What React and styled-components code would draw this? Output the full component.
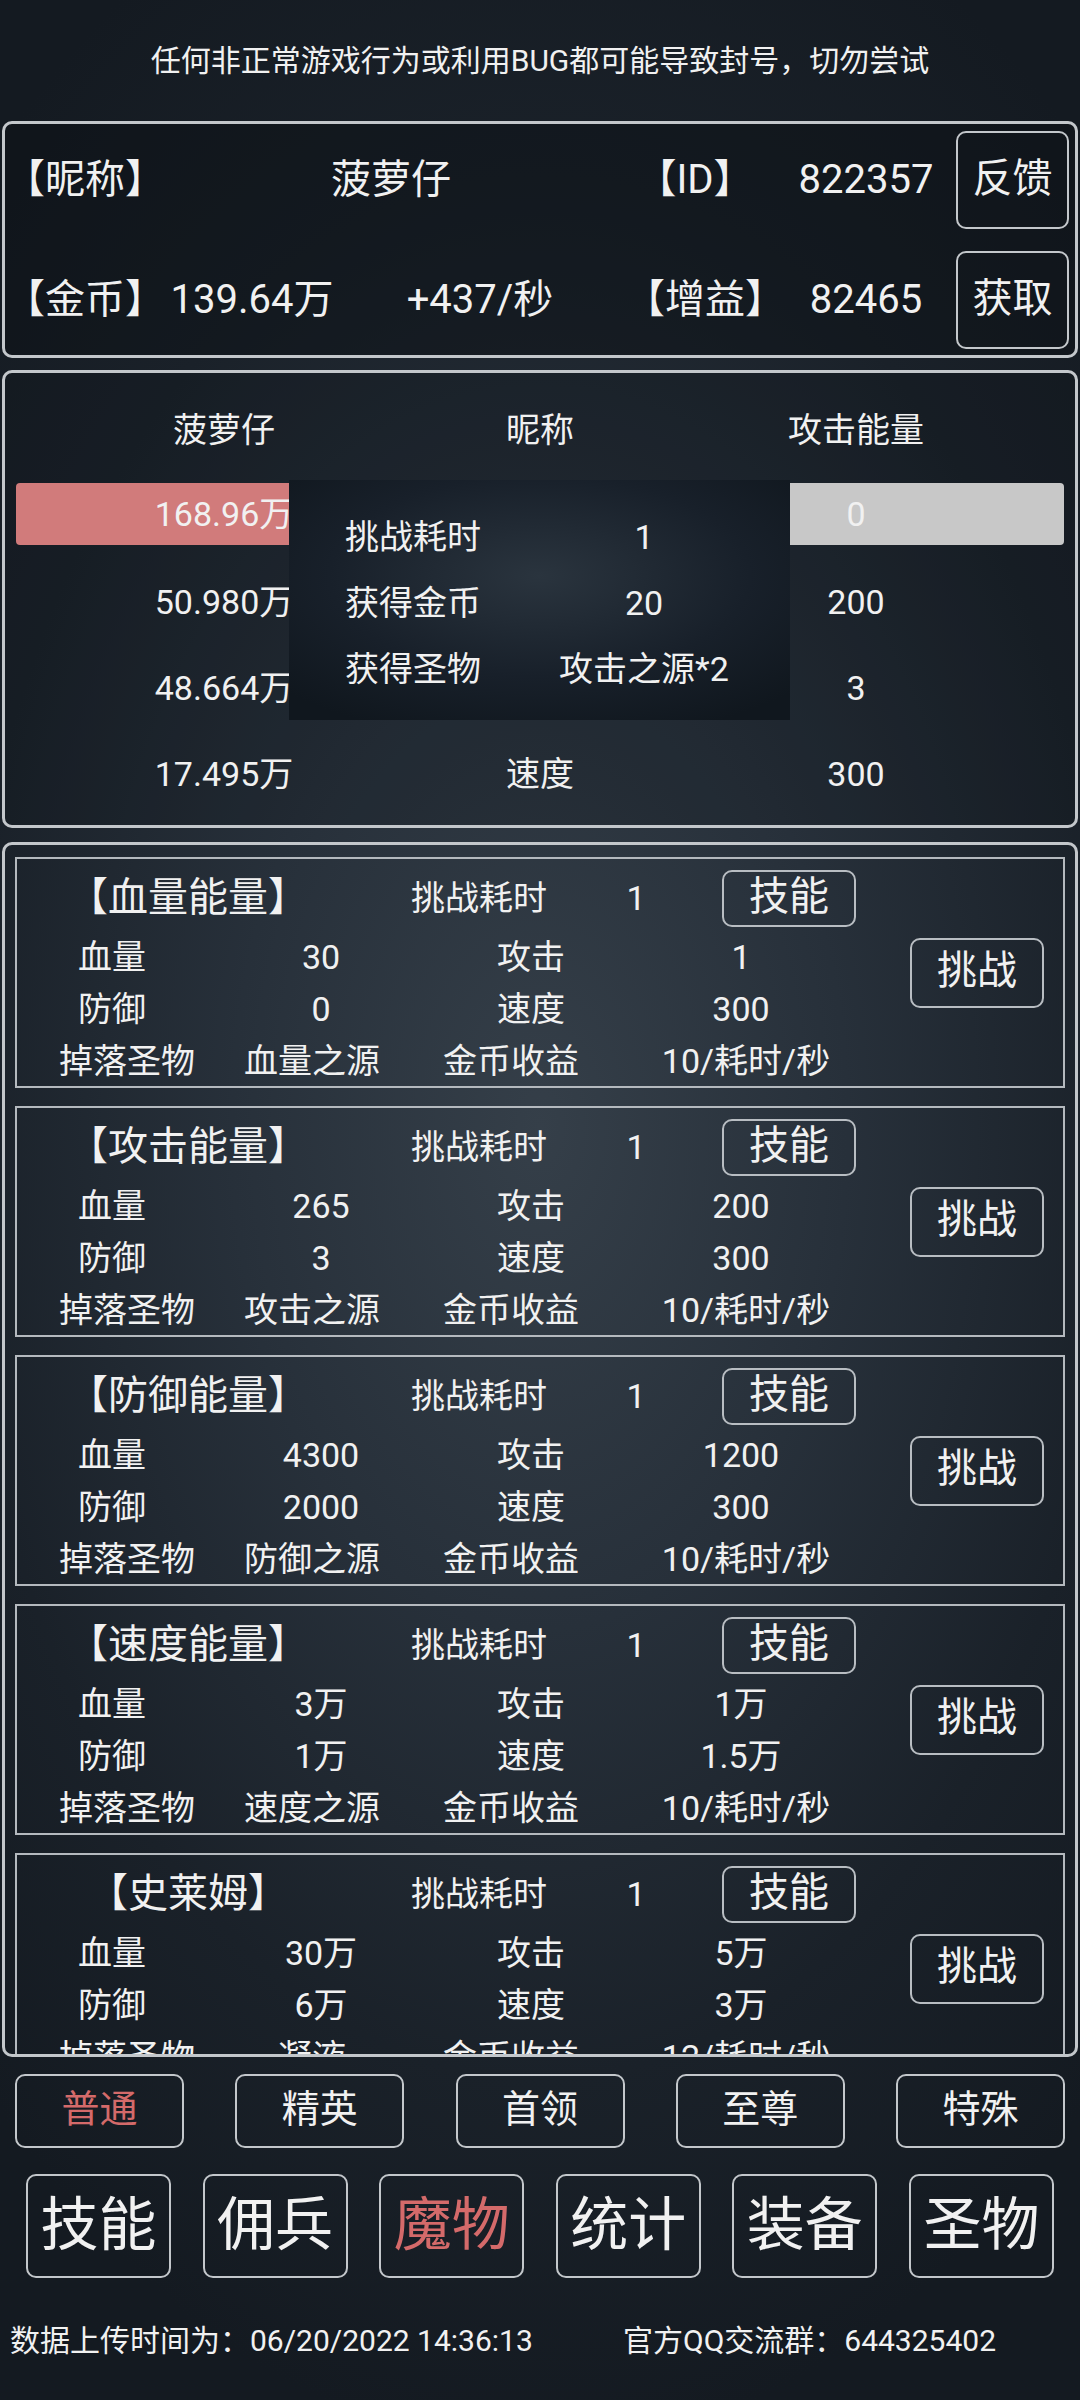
import React from 'react';
import styled, { createGlobalStyle } from 'styled-components';

const GlobalStyle = createGlobalStyle`
  html, body {
    margin: 0;
    padding: 0;
  }

  body {
    width: 1080px;
    height: 2400px;
    background: radial-gradient(ellipse 75% 55% at 50% 47%, #353f49 0%, #27303a 38%, #1a2129 72%, #141a21 100%);
    color: #f1f1f1;
    font-family: Roboto, "Noto Sans CJK SC", sans-serif;
    line-height: 1.2;
  }
`;

const RED = '#d46a6a';

const Page = styled.div`
  width: 1080px;
  height: 2400px;
  display: flex;
  flex-direction: column;
`;

const Banner = styled.div`
  height: 121px;
  display: flex;
  align-items: center;
  justify-content: center;
  font-size: 30px;
`;

/* top info block */
const InfoPanel = styled.div`
  margin: 0 2px;
  height: 237px;
  box-sizing: border-box;
  border: 3px solid #c3c7cb;
  border-radius: 10px;
  background: rgba(10, 15, 21, 0.45);
  padding: 7px 6px 6px 0;
  display: flex;
  flex-direction: column;
  gap: 22px;
`;

const InfoRow = styled.div`
  height: 98px;
  display: flex;
  align-items: center;
`;

const InfoCell = styled.div`
  width: ${p => p.w}px;
  text-align: ${p => p.align || 'center'};
  font-size: 40px;
  white-space: nowrap;
`;

const SideButton = styled.button`
  margin-left: auto;
  width: 113px;
  height: 98px;
  box-sizing: border-box;
  border: 2px solid #c3c7cb;
  border-radius: 10px;
  background: transparent;
  color: #f1f1f1;
  font-family: inherit;
  font-size: 40px;
  line-height: 1.2;
  padding: 0 0 3px;
`;

/* battle compare block */
const StatsPanel = styled.div`
  position: relative;
  margin: 12px 2px 0;
  height: 458px;
  box-sizing: border-box;
  border: 3px solid #c3c7cb;
  border-radius: 10px;
  background: rgba(10, 15, 21, 0.2);
  padding: 14px 11px 0;
`;

const StatsRow = styled.div`
  display: grid;
  grid-template-columns: repeat(3, 316px);
  justify-content: center;
  align-items: center;
  height: 86px;
  font-size: 34px;
  white-space: nowrap;
  text-align: center;
`;

const BarRow = styled(StatsRow)`
  height: 62px;
  margin: 10px 0 14px;
  border-radius: 4px;
  background: linear-gradient(to right, #d17b7b ${p => p.fill}%, #c8c8c8 ${p => p.fill}%);
`;

const ResultPopup = styled.div`
  position: absolute;
  top: 107px;
  left: 284px;
  width: 501px;
  height: 240px;
  box-sizing: border-box;
  padding-top: 24px;
  background: radial-gradient(ellipse 70% 70% at 50% 40%, #2a343e 0%, #18202a 60%, #10171e 100%);
`;

const PopupRow = styled.div`
  display: grid;
  grid-template-columns: 248px 214px;
  align-items: center;
  height: 66px;
  font-size: 34px;
  text-align: center;
  white-space: nowrap;
`;

/* monster list */
const ListPanel = styled.div`
  margin: 14px 2px 0;
  height: 1215px;
  box-sizing: border-box;
  border: 3px solid #c3c7cb;
  border-radius: 10px;
  overflow: hidden;
  padding: 12px 10px 0;
  display: flex;
  flex-direction: column;
  gap: 18px;
`;

const Card = styled.div`
  flex-shrink: 0;
  height: 231px;
  box-sizing: border-box;
  border: 2px solid #b4b9be;
  display: flex;
  align-items: center;
`;

const CardBody = styled.div`
  align-self: stretch;
  flex: 1;
  padding-top: 6px;
`;

const CardHead = styled.div`
  height: 66px;
  display: flex;
  align-items: center;
  white-space: nowrap;
`;

const Title = styled.div`
  width: 342px;
  text-align: center;
  font-size: 40px;
`;

const HeadCell = styled.div`
  width: ${p => p.w}px;
  text-align: center;
  font-size: 34px;
`;

const SkillButton = styled.button`
  margin-left: 49px;
  width: 134px;
  height: 57px;
  box-sizing: border-box;
  border: 2px solid #b8bdc2;
  border-radius: 10px;
  background: transparent;
  color: #f1f1f1;
  font-family: inherit;
  font-size: 40px;
  line-height: 1.2;
  padding: 0 0 3px;
`;

const StatLine = styled.div`
  display: grid;
  grid-template-columns: ${p => p.cols || '190px 228px 192px 228px'};
  align-items: center;
  height: 52px;
  font-size: 34px;
  text-align: center;
  white-space: nowrap;
`;

const ChallengeButton = styled(SkillButton)`
  margin: 0 19px 0 0;
  height: 70px;
`;

/* bottom buttons */
const TabRow = styled.div`
  margin-top: 17px;
  padding: 0 15px;
  display: flex;
  justify-content: space-between;
`;

const TabButton = styled.button`
  width: 169px;
  height: 74px;
  box-sizing: border-box;
  border: 2px solid #c3c7cb;
  border-radius: 10px;
  background: transparent;
  color: ${p => (p.active ? RED : '#f1f1f1')};
  font-family: inherit;
  font-size: 38px;
  line-height: 1.2;
  padding: 0 0 2px;
`;

const NavRow = styled.div`
  margin-top: 26px;
  padding: 0 26px;
  display: flex;
  justify-content: space-between;
`;

const NavButton = styled(TabButton)`
  width: 145px;
  height: 104px;
  font-size: 58px;
  padding: 0;
`;

const Footer = styled.div`
  margin-top: 41px;
  height: 44px;
  padding-left: 10px;
  display: flex;
  align-items: center;
  font-size: 30px;
  white-space: nowrap;
`;

const FooterText = styled.span`
  width: ${p => (p.w ? `${p.w}px` : 'auto')};
`;

const monsters = [
  { name: '【血量能量】', hp: '30', atk: '1', def: '0', spd: '300', drop: '血量之源', gold: '10/耗时/秒' },
  { name: '【攻击能量】', hp: '265', atk: '200', def: '3', spd: '300', drop: '攻击之源', gold: '10/耗时/秒' },
  { name: '【防御能量】', hp: '4300', atk: '1200', def: '2000', spd: '300', drop: '防御之源', gold: '10/耗时/秒' },
  { name: '【速度能量】', hp: '3万', atk: '1万', def: '1万', spd: '1.5万', drop: '速度之源', gold: '10/耗时/秒' },
  { name: '【史莱姆】', hp: '30万', atk: '5万', def: '6万', spd: '3万', drop: '凝液', gold: '12/耗时/秒' },
];

const tabs = ['普通', '精英', '首领', '至尊', '特殊'];
const navs = ['技能', '佣兵', '魔物', '统计', '装备', '圣物'];

function MonsterCard({ m }) {
  return (
    <Card>
      <CardBody>
        <CardHead>
          <Title>{m.name}</Title>
          <HeadCell w={240}>挑战耗时</HeadCell>
          <HeadCell w={74}>1</HeadCell>
          <SkillButton>技能</SkillButton>
        </CardHead>
        <StatLine>
          <span>血量</span>
          <span>{m.hp}</span>
          <span>攻击</span>
          <span>{m.atk}</span>
        </StatLine>
        <StatLine>
          <span>防御</span>
          <span>{m.def}</span>
          <span>速度</span>
          <span>{m.spd}</span>
        </StatLine>
        <StatLine cols="220px 150px 248px 222px">
          <span>掉落圣物</span>
          <span>{m.drop}</span>
          <span>金币收益</span>
          <span>{m.gold}</span>
        </StatLine>
      </CardBody>
      <ChallengeButton>挑战</ChallengeButton>
    </Card>
  );
}

export default function App() {
  return (
    <Page>
      <GlobalStyle />
      <Banner>任何非正常游戏行为或利用BUG都可能导致封号，切勿尝试</Banner>

      <InfoPanel>
        <InfoRow>
          <InfoCell w={164} align="left">【昵称】</InfoCell>
          <InfoCell w={444}>菠萝仔</InfoCell>
          <InfoCell w={164}>【ID】</InfoCell>
          <InfoCell w={178}>822357</InfoCell>
          <SideButton>反馈</SideButton>
        </InfoRow>
        <InfoRow>
          <InfoCell w={164} align="left">【金币】</InfoCell>
          <InfoCell w={166}>139.64万</InfoCell>
          <InfoCell w={290}>+437/秒</InfoCell>
          <InfoCell w={152}>【增益】</InfoCell>
          <InfoCell w={178}>82465</InfoCell>
          <SideButton>获取</SideButton>
        </InfoRow>
      </InfoPanel>

      <StatsPanel>
        <StatsRow>
          <span>菠萝仔</span>
          <span>昵称</span>
          <span>攻击能量</span>
        </StatsRow>
        <BarRow fill={50}>
          <span>168.96万</span>
          <span>血量</span>
          <span>0</span>
        </BarRow>
        <StatsRow>
          <span>50.980万</span>
          <span>攻击</span>
          <span>200</span>
        </StatsRow>
        <StatsRow>
          <span>48.664万</span>
          <span>防御</span>
          <span>3</span>
        </StatsRow>
        <StatsRow>
          <span>17.495万</span>
          <span>速度</span>
          <span>300</span>
        </StatsRow>
        <ResultPopup>
          <PopupRow>
            <span>挑战耗时</span>
            <span>1</span>
          </PopupRow>
          <PopupRow>
            <span>获得金币</span>
            <span>20</span>
          </PopupRow>
          <PopupRow>
            <span>获得圣物</span>
            <span>攻击之源*2</span>
          </PopupRow>
        </ResultPopup>
      </StatsPanel>

      <ListPanel>
        {monsters.map(m => (
          <MonsterCard key={m.name} m={m} />
        ))}
      </ListPanel>

      <TabRow>
        {tabs.map((t, i) => (
          <TabButton key={t} active={i === 0}>{t}</TabButton>
        ))}
      </TabRow>

      <NavRow>
        {navs.map(n => (
          <NavButton key={n} active={n === '魔物'}>{n}</NavButton>
        ))}
      </NavRow>

      <Footer>
        <FooterText w={613}>数据上传时间为：06/20/2022 14:36:13</FooterText>
        <FooterText>官方QQ交流群：644325402</FooterText>
      </Footer>
    </Page>
  );
}
